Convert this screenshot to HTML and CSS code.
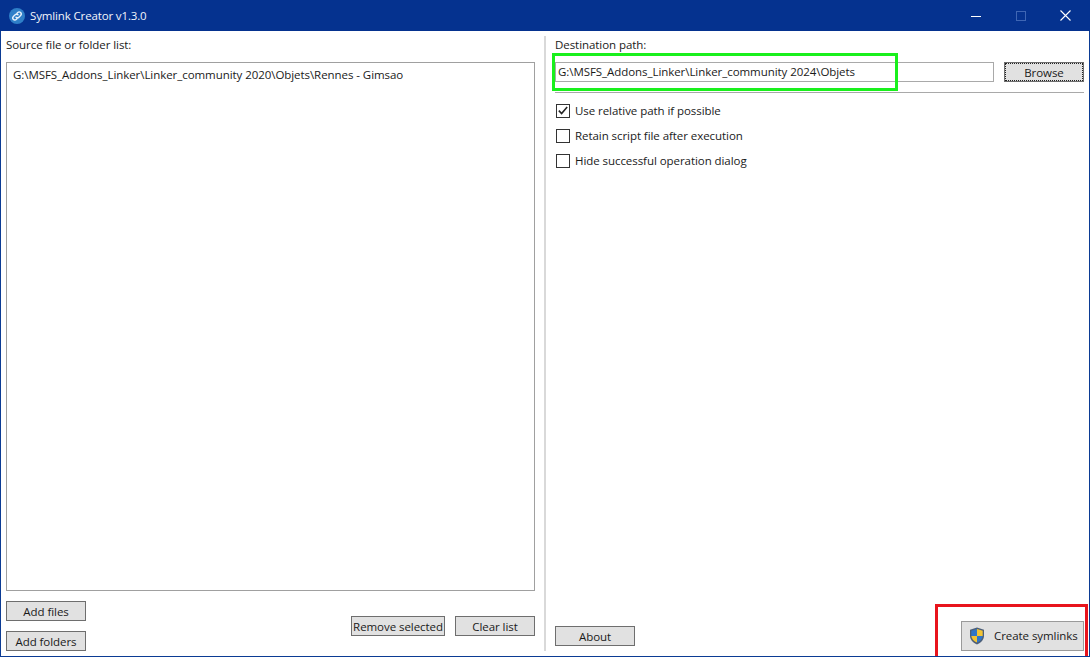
FILE: index.html
```html
<!DOCTYPE html>
<html lang="en">
<head>
<meta charset="utf-8">
<title>Symlink Creator v1.3.0</title>
<link rel="stylesheet" href="styles.css">
</head>
<body>
<div class="window">
  <header class="titlebar">
    <svg class="app-icon" width="16" height="16" viewBox="0 0 16 16">
      <circle cx="8" cy="8" r="8" fill="#2f7fc8"/>
      <g fill="none" stroke="#e6f1fb" stroke-width="1.4" stroke-linecap="round">
        <path d="M7 9.2a2 2 0 0 0 2.9 0l1.7-1.7a2 2 0 0 0-2.9-2.9l-.8.8"/>
        <path d="M9 6.8a2 2 0 0 0-2.9 0L4.4 8.500a2 2 0 0 0 2.9 2.9l.8-.8"/>
      </g>
    </svg>
    <span class="title-text">Symlink Creator v1.3.0</span>
    <div class="controls">
      <span class="control">
        <svg width="10" height="10" viewBox="0 0 10 10"><path d="M0 5.500h10" stroke="#fff" stroke-width="1"/></svg>
      </span>
      <span class="control">
        <svg width="10" height="10" viewBox="0 0 10 10"><rect x=".5" y=".5" width="9" height="9" fill="none" stroke="#3f66b4" stroke-width="1"/></svg>
      </span>
      <span class="control">
        <svg width="11" height="11" viewBox="0 0 11 11"><path d="M.5.5l10 10M10.500.5l-10 10" stroke="#fff" stroke-width="1.1"/></svg>
      </span>
    </div>
  </header>
  <main class="content">
    <section class="pane left">
      <div class="label">Source file or folder list:</div>
      <div class="listbox"><div class="list-item">G:\MSFS_Addons_Linker\Linker_community 2020\Objets\Rennes - Gimsao</div></div>
      <div class="left-actions">
        <div class="stack">
          <button class="btn">Add files</button>
          <button class="btn">Add folders</button>
        </div>
        <div class="row">
          <button class="btn btn-remove">Remove selected</button>
          <button class="btn">Clear list</button>
        </div>
      </div>
    </section>
    <div class="divider"></div>
    <section class="pane right">
      <div class="label">Destination path:</div>
      <div class="dest-row">
        <div class="textbox">G:\MSFS_Addons_Linker\Linker_community 2024\Objets</div>
        <button class="btn btn-focus">Browse</button>
      </div>
      <hr class="rule">
      <div class="options">
        <label class="option">
          <span class="check">
            <svg width="13" height="13" viewBox="0 0 13 13"><path d="M2 6.600l3 3.200L11 2.800" fill="none" stroke="#222" stroke-width="1.7"/></svg>
          </span>Use relative path if possible
        </label>
        <label class="option"><span class="check"></span>Retain script file after execution</label>
        <label class="option"><span class="check"></span>Hide successful operation dialog</label>
      </div>
      <div class="right-actions">
        <button class="btn btn-about">About</button>
        <button class="btn btn-create">
          <svg width="16" height="18" viewBox="0 0 16 18">
            <path d="M8 .5l7 2.200v6c0 4-3 7-7 8.800-4-1.800-7-4.800-7-8.800v-6z" fill="#4d5f78"/>
            <path d="M8 2L2.300 3.700V9H8z" fill="#2f76c9"/>
            <path d="M8 2l5.700 1.700V9H8z" fill="#f3c434"/>
            <path d="M8 9H2.300c.3 3 2.700 5.200 5.700 6.600z" fill="#f3c434"/>
            <path d="M8 9h5.700c-.3 3-2.700 5.200-5.700 6.600z" fill="#2f76c9"/>
          </svg>
          <span>Create symlinks</span>
        </button>
      </div>
    </section>
  </main>
  <div class="mark mark-green"></div>
  <div class="mark mark-red"></div>
</div>
</body>
</html>
```
FILE: styles.css
```css
* { box-sizing: border-box; }
html, body { margin: 0; height: 100%; }
body {
  font-family: "Open Sans", "Noto Sans", "Liberation Sans", sans-serif;
  font-size: 11.5px;
  letter-spacing: -0.06px;
  color: #1a1a1a;
  background: #fff;
  overflow: hidden;
}
.window {
  position: relative;
  width: 1090px;
  height: 657px;
  display: flex;
  flex-direction: column;
  border: 1px solid #0b3b94;
  border-top: 0;
  background: #fff;
}
.titlebar {
  flex: none;
  height: 31px;
  margin: 0 -1px;
  padding-left: 9px;
  display: flex;
  align-items: center;
  background: #05328f;
  color: #f2f5fb;
}
.app-icon { flex: none; }
.title-text { margin-left: 5px; letter-spacing: -0.14px; }
.controls { margin-left: auto; padding-right: 2px; display: flex; }
.control {
  width: 45px;
  height: 31px;
  display: flex;
  align-items: center;
  justify-content: center;
}
.content {
  flex: 1;
  min-height: 0;
  display: flex;
  padding: 0 5px 5px;
}
.pane {
  display: flex;
  flex-direction: column;
  width: 529px;
}
.left { flex: none; }
.right { flex: none; }
.label { height: 31px; padding-top: 6px; line-height: 16px; }
.divider {
  flex: none;
  width: 2px;
  margin: 5px 9px 0;
  background: #d9d9d9;
}
.listbox {
  flex: 1;
  min-height: 0;
  border: 1px solid #a0a0a0;
  padding: 4px 6px;
  line-height: 16px;
}
.left-actions {
  flex: none;
  display: flex;
  justify-content: space-between;
  align-items: flex-end;
  padding-top: 10px;
}
.stack { display: flex; flex-direction: column; gap: 10px; }
.row { display: flex; gap: 10px; margin-bottom: 15px; }
.btn {
  width: 80px;
  height: 20px;
  padding: 1px 0 0;
  border: 1px solid #6e6e6e;
  background: #e1e1e1;
  color: #1a1a1a;
  font: inherit;
  letter-spacing: inherit;
  line-height: 16px;
}
.btn-remove { width: 94px; }
.btn-focus { outline: 1px dotted #222; outline-offset: -2px; }
.dest-row { display: flex; gap: 10px; }
.textbox {
  flex: 1;
  height: 20px;
  border: 1px solid #a9a9a9;
  padding: 0 2px;
  line-height: 18px;
}
.rule {
  width: 100%;
  height: 1px;
  margin: 10px 0 10px;
  border: 0;
  background: #a9a9a9;
}
.options { display: flex; flex-direction: column; gap: 10px; }
.option { display: flex; align-items: center; height: 15px; padding-left: 1px; }
.check {
  width: 14px;
  height: 14px;
  margin-right: 5px;
  border: 1px solid #333;
  display: flex;
  align-items: center;
  justify-content: center;
}
.right-actions {
  margin-top: auto;
  display: flex;
  justify-content: space-between;
  align-items: flex-end;
}
.btn-about { margin-bottom: 5px; }
.btn-create {
  width: 123px;
  height: 30px;
  padding: 0 0 0 7px;
  display: flex;
  align-items: center;
  gap: 9px;
  border-color: #9a9a9a;
}
.mark { position: absolute; pointer-events: none; }
.mark-green { left: 551px; top: 53px; width: 346px; height: 38px; border: 3px solid #19f01c; }
.mark-red { left: 934px; top: 604px; width: 153px; height: 52px; border: 3px solid #e8141c; border-bottom: 0; }
```
